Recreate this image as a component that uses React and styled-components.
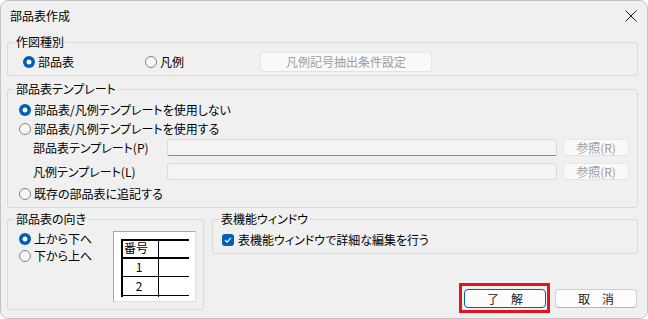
import React from 'react';
import styled, { createGlobalStyle } from 'styled-components';

const GlobalStyle = createGlobalStyle`
  html, body {
    margin: 0;
    padding: 0;
    background: #ffffff;
  }
  body {
    font-family: "Noto Sans CJK JP", "Noto Sans", sans-serif;
    font-size: 12px;
    font-feature-settings: "palt";
    color: #000;
  }
`;

const Window = styled.div`
  width: 648px;
  height: 319px;
  box-sizing: border-box;
  border: 1px solid #c4c4c4;
  border-radius: 8px;
  background: #f0f0f0;
  display: flex;
  flex-direction: column;
  overflow: hidden;
`;

const TitleBar = styled.div`
  height: 31px;
  display: flex;
  align-items: center;
  justify-content: space-between;
  padding: 0 10px 0 9px;
  line-height: 16px;
`;

const Body = styled.div`
  flex: 1;
  display: flex;
  flex-direction: column;
  padding: 3px 9px 8px 6px;
`;

const Group = styled.fieldset`
  margin: ${(p) => p.$mt || 0}px 0 0 0;
  padding: 0;
  border: 1px solid #dadada;
  border-radius: 3px;
  min-width: 0;
  width: ${(p) => (p.$w ? `${p.$w}px` : 'auto')};
  box-sizing: border-box;
  flex: ${(p) => (p.$w ? 'none' : 'initial')};
`;

const Legend = styled.legend`
  margin-left: 6px;
  padding: 0 2px;
  line-height: 16px;
  font-size: 12px;
`;

const KindRow = styled.div`
  display: flex;
  align-items: center;
  height: 20px;
  padding: 2px 0 3px 15px;
`;

const RadioItem = styled.label`
  display: flex;
  align-items: center;
  gap: 3px;
  height: ${(p) => p.$h || 18}px;
  width: ${(p) => (p.$w ? `${p.$w}px` : 'auto')};
  line-height: 16px;
  white-space: nowrap;
`;

const RadioMark = styled.span`
  width: 12px;
  height: 12px;
  box-sizing: border-box;
  border-radius: 50%;
  flex: none;
  ${(p) =>
    p.$checked
      ? 'background: radial-gradient(circle, #fff 0 2.2px, #005fb8 2.8px);'
      : 'border: 1px solid #858585; background: #f7f7f7;'}
`;

const Button = styled.button`
  position: relative;
  font-family: inherit;
  font-size: 12px;
  font-feature-settings: "palt";
  line-height: 16px;
  width: ${(p) => p.$w}px;
  height: ${(p) => p.$h || 20}px;
  padding: 0;
  box-sizing: border-box;
  border-radius: 4px;
  background: ${(p) => (p.disabled ? '#f9f9f9' : '#fdfdfd')};
  color: ${(p) => (p.disabled ? '#9d9d9d' : '#1a1a1a')};
  border: 1px solid ${(p) => (p.disabled ? '#e6e6e6' : p.$default ? '#005fb8' : '#cfcfcf')};
  border-bottom-color: ${(p) => (p.disabled ? '#e2e2e2' : p.$default ? '#005fb8' : '#b5b5b5')};
  margin-left: ${(p) => p.$ml || 0}px;
  flex: none;
  ${(p) =>
    p.$marked &&
    `&::after {
      content: "";
      position: absolute;
      left: -6px;
      right: -5px;
      top: -7px;
      bottom: -6px;
      border: 3px solid #e3141b;
    }`}
`;

const TemplateBody = styled.div`
  display: flex;
  flex-direction: column;
  padding: 4px 8px 4px 11px;
`;

const FieldRow = styled.div`
  display: flex;
  align-items: center;
  height: 17px;
  padding-left: 14px;
  margin-top: ${(p) => p.$mt || 0}px;
`;

const FieldLabel = styled.span`
  width: 134px;
  flex: none;
  line-height: 16px;
  white-space: nowrap;
`;

const TextBox = styled.div`
  flex: 1;
  height: 17px;
  box-sizing: border-box;
  background: #f4f4f4;
  border: 1px solid #dcdcdc;
  border-bottom-color: ${(p) => (p.$active ? '#8a8a8a' : '#dcdcdc')};
  border-radius: 2px;
`;

const Spaced = styled.div`
  margin-top: ${(p) => p.$mt || 0}px;
`;

const BottomRow = styled.div`
  display: flex;
  gap: 8px;
  margin-top: 3px;
  flex: 1;
`;

const DirectionBody = styled.div`
  display: flex;
  padding: 3px 6px 7px 11px;
`;

const RadioColumn = styled.div`
  width: 94px;
  display: flex;
  flex-direction: column;
`;

const Preview = styled.div`
  width: 83px;
  height: 71px;
  margin-top: 1px;
  box-sizing: border-box;
  background: #fff;
  border: 1px solid #a8a8a8;
  border-right-color: #dedede;
  border-bottom-color: #dedede;
`;

const RightColumn = styled.div`
  flex: 1;
  display: flex;
  flex-direction: column;
  justify-content: space-between;
`;

const CheckRow = styled.label`
  display: flex;
  align-items: center;
  gap: 4px;
  height: 18px;
  padding: 4px 0 4px 9px;
  line-height: 16px;
`;

const CheckMark = styled.span`
  width: 12px;
  height: 12px;
  border-radius: 3px;
  background: #005fb8;
  display: flex;
  align-items: center;
  justify-content: center;
  flex: none;
`;

const ButtonRow = styled.div`
  display: flex;
  justify-content: flex-end;
  gap: 9px;
  padding: 0 1px 2px 0;
`;

function Radio({ checked, children, w, h }) {
  return (
    <RadioItem $w={w} $h={h}>
      <RadioMark $checked={checked} />
      {children}
    </RadioItem>
  );
}

function TablePreview() {
  return (
    <svg width="81" height="69" viewBox="0 0 81 69">
      <rect x="7" y="7" width="2" height="58" fill="#000" />
      <rect x="7" y="7" width="68" height="2" fill="#000" />
      <rect x="7" y="25" width="68" height="2" fill="#000" />
      <rect x="7" y="44" width="68" height="1" fill="#000" />
      <rect x="7" y="63" width="68" height="1" fill="#000" />
      <rect x="44" y="7" width="1" height="58" fill="#000" />
      <text x="22" y="21" fontSize="12" textAnchor="middle" fontFamily="Noto Sans CJK JP, sans-serif">番号</text>
      <text x="25" y="40" fontSize="12" textAnchor="middle" fontFamily="Noto Sans CJK JP, sans-serif">1</text>
      <text x="25" y="59" fontSize="12" textAnchor="middle" fontFamily="Noto Sans CJK JP, sans-serif">2</text>
    </svg>
  );
}

export default function App() {
  return (
    <>
      <GlobalStyle />
      <Window>
        <TitleBar>
          <span>部品表作成</span>
          <svg width="12" height="12" viewBox="0 0 12 12">
            <path d="M0.5 0.5 L11.5 11.5 M11.5 0.5 L0.5 11.5" stroke="#1a1a1a" strokeWidth="1" />
          </svg>
        </TitleBar>
        <Body>
          <Group>
            <Legend>作図種別</Legend>
            <KindRow>
              <Radio checked w={122} h={20}>部品表</Radio>
              <Radio w={115} h={20}>凡例</Radio>
              <Button disabled $w={172}>凡例記号抽出条件設定</Button>
            </KindRow>
          </Group>

          <Group $mt={5}>
            <Legend>部品表テンプレート</Legend>
            <TemplateBody>
              <Radio checked h={18}>部品表/凡例テンプレートを使用しない</Radio>
              <Spaced $mt={1}>
                <Radio h={18}>部品表/凡例テンプレートを使用する</Radio>
              </Spaced>
              <FieldRow $mt={1}>
                <FieldLabel>部品表テンプレート(P)</FieldLabel>
                <TextBox $active />
                <Button disabled $w={66} $h={17} $ml={6}>参照(R)</Button>
              </FieldRow>
              <FieldRow $mt={7}>
                <FieldLabel>凡例テンプレート(L)</FieldLabel>
                <TextBox />
                <Button disabled $w={66} $h={17} $ml={6}>参照(R)</Button>
              </FieldRow>
              <Spaced $mt={5}>
                <Radio h={18}>既存の部品表に追記する</Radio>
              </Spaced>
            </TemplateBody>
          </Group>

          <BottomRow>
            <Group $w={197}>
              <Legend>部品表の向き</Legend>
              <DirectionBody>
                <RadioColumn>
                  <Radio checked h={17}>上から下へ</Radio>
                  <Radio h={17}>下から上へ</Radio>
                </RadioColumn>
                <Preview>
                  <TablePreview />
                </Preview>
              </DirectionBody>
            </Group>

            <RightColumn>
              <Group>
                <Legend>表機能ウィンドウ</Legend>
                <CheckRow>
                  <CheckMark>
                    <svg width="8" height="8" viewBox="0 0 8 8">
                      <path d="M1 4.2 L3 6.2 L7 1.8" stroke="#fff" strokeWidth="1.2" fill="none" />
                    </svg>
                  </CheckMark>
                  表機能ウィンドウで詳細な編集を行う
                </CheckRow>
              </Group>
              <ButtonRow>
                <Button $w={82} $h={19} $default $marked>了　解</Button>
                <Button $w={82} $h={19}>取　消</Button>
              </ButtonRow>
            </RightColumn>
          </BottomRow>
        </Body>
      </Window>
    </>
  );
}
